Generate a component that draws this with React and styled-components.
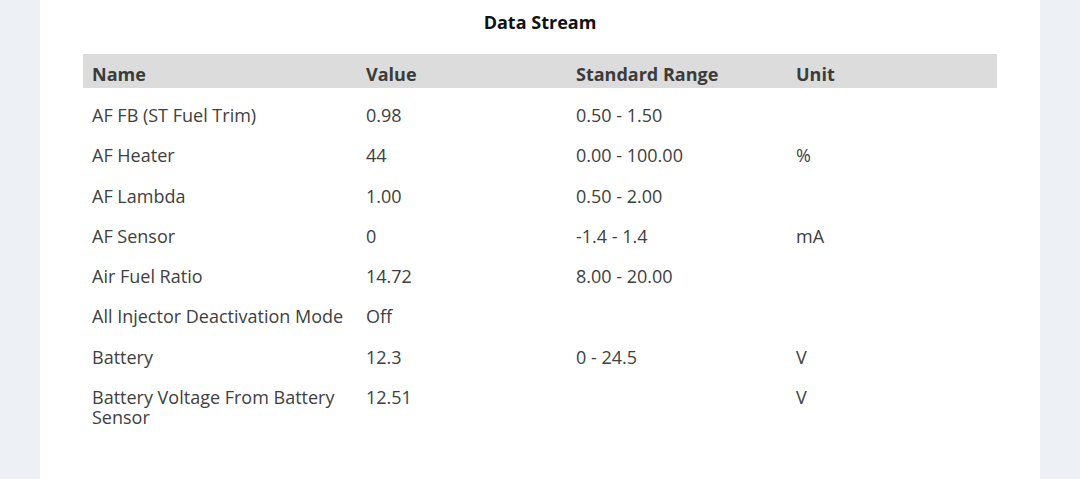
import React from 'react'
import styled, { createGlobalStyle } from 'styled-components'

const GlobalStyle = createGlobalStyle`
    html, body {
        margin: 0;
        padding: 0;
        background: #edf0f5;
        font-family: "Open Sans", "Liberation Sans", sans-serif;
    }
`

const rows = [
    { name: 'AF FB (ST Fuel Trim)', value: '0.98', range: '0.50 - 1.50', unit: '' },
    { name: 'AF Heater', value: '44', range: '0.00 - 100.00', unit: '%' },
    { name: 'AF Lambda', value: '1.00', range: '0.50 - 2.00', unit: '' },
    { name: 'AF Sensor', value: '0', range: '-1.4 - 1.4', unit: 'mA' },
    { name: 'Air Fuel Ratio', value: '14.72', range: '8.00 - 20.00', unit: '' },
    { name: 'All Injector Deactivation Mode', value: 'Off', range: '', unit: '' },
    { name: 'Battery', value: '12.3', range: '0 - 24.5', unit: 'V' },
    { name: 'Battery Voltage From Battery Sensor', value: '12.51', range: '', unit: 'V' },
]

const columns = [
    { label: 'Name', width: 274 },
    { label: 'Value', width: 210 },
    { label: 'Standard Range', width: 220 },
    { label: 'Unit', width: 210 },
]

export default function App() {
    return (
        <Page>
            <GlobalStyle />
            <Panel>
                <Title>Data Stream</Title>
                <Table>
                    <colgroup>
                        {columns.map(col => <col key={col.label} style={{ width: col.width }} />)}
                    </colgroup>
                    <thead>
                        <tr>
                            {columns.map(col => <HeadCell key={col.label}>{col.label}</HeadCell>)}
                        </tr>
                    </thead>
                    <tbody>
                        {rows.map(row => (
                            <tr key={row.name}>
                                <Cell>{row.name}</Cell>
                                <Cell>{row.value}</Cell>
                                <Cell>{row.range}</Cell>
                                <Cell>{row.unit}</Cell>
                            </tr>
                        ))}
                    </tbody>
                </Table>
            </Panel>
        </Page>
    )
}

const Page = styled.div`
    min-height: 479px;
    display: flex;
    justify-content: center;
`

const Panel = styled.div`
    width: 1000px;
    min-height: 479px;
    background: #ffffff;
    padding: 10px 43px 40px;
    box-sizing: border-box;
`

const Title = styled.h3`
    margin: 0 0 20px;
    font-size: 18px;
    line-height: 24px;
    font-weight: 700;
    color: #111111;
    text-align: center;
`

const Table = styled.table`
    width: 914px;
    border-collapse: collapse;
    table-layout: fixed;
`

const HeadCell = styled.th`
    background: #dcdcdc;
    color: #3b3b3b;
    font-size: 18px;
    font-weight: 700;
    line-height: 24px;
    text-align: left;
    padding: 8px 9px 2px;
`

const Cell = styled.td`
    color: #404040;
    font-size: 18px;
    line-height: 19.5px;
    padding: 18px 9px 2.8px;
    vertical-align: top;
`
